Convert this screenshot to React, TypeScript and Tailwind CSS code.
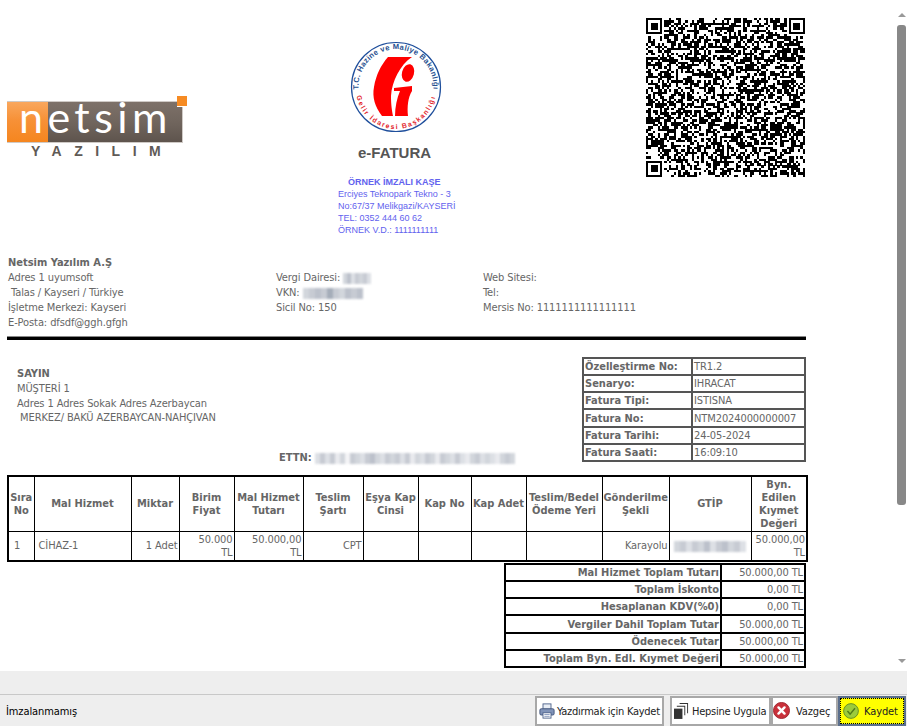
import React from "react";

const font = "font-['DejaVu_Sans_Condensed','DejaVu_Sans',sans-serif]";

// pseudo random modules for the qr drawing
const qrSize = 69;
const inFinder = (x: number, y: number) =>
  (x < 8 && y < 8) || (x >= qrSize - 8 && y < 8) || (x < 8 && y >= qrSize - 8);

const qrCells: { x: number; y: number }[] = [];
let seed = 1337;
for (let y = 0; y < qrSize; y++) {
  for (let x = 0; x < qrSize; x++) {
    seed = (seed * 1103515245 + 12345) & 0x7fffffff;
    if (!inFinder(x, y) && (seed >> 16) % 100 < 52) qrCells.push({ x, y });
  }
}

const QrCode = () => (
  <svg width="159" height="159" viewBox="0 0 69 69" shapeRendering="crispEdges">
    <rect width="69" height="69" fill="#fff" />
    {qrCells.map((c) => (
      <rect key={`${c.x}-${c.y}`} x={c.x} y={c.y} width="1.02" height="1.02" fill="#000" />
    ))}
    {[
      [0, 0],
      [62, 0],
      [0, 62],
    ].map(([x, y]) => (
      <g key={`${x}-${y}`}>
        <rect x={x} y={y} width="7" height="7" fill="#000" />
        <rect x={x + 1} y={y + 1} width="5" height="5" fill="#fff" />
        <rect x={x + 2} y={y + 2} width="3" height="3" fill="#000" />
      </g>
    ))}
  </svg>
);

const NetsimLogo = () => (
  <svg width="181" height="75" viewBox="0 -10 181 75">
    <defs>
      <linearGradient id="brown" x1="0" y1="0" x2="0" y2="1">
        <stop offset="0" stopColor="#7d7169" />
        <stop offset="0.55" stopColor="#6f645c" />
        <stop offset="1" stopColor="#5e544d" />
      </linearGradient>
      <linearGradient id="orange" x1="0" y1="0" x2="0" y2="1">
        <stop offset="0" stopColor="#f9a75d" />
        <stop offset="0.45" stopColor="#f79137" />
        <stop offset="1" stopColor="#f5861f" />
      </linearGradient>
    </defs>
    <rect x="0" y="5" width="176" height="42" fill="#cfcac6" />
    <rect x="0" y="6" width="41" height="40" fill="url(#orange)" />
    <rect x="41" y="6" width="134" height="40" fill="url(#brown)" />
    <rect x="170" y="0" width="11" height="11" fill="#fff" />
    <rect x="170" y="0" width="10" height="10" fill="#f68b23" />
    <text x="12" y="37" fill="#fff" fontFamily="Lato, sans-serif" fontSize="43" letterSpacing="4.4">
      netsim
    </text>
    <text x="24" y="60" fill="#5f5a56" fontFamily="'Liberation Sans', sans-serif" fontWeight="700" fontSize="14" letterSpacing="12.5">
      YAZILIM
    </text>
  </svg>
);

const GibSeal = () => (
  <svg width="92" height="92" viewBox="0 0 92 92">
    <defs>
      <path id="sealTop" d="M 16.5 69 A 37.5 37.5 0 1 1 75.5 69" />
      <path id="sealBottom" d="M 6 48 A 40 40 0 0 0 86 48" />
    </defs>
    <circle cx="46" cy="46" r="44.5" fill="#fff" stroke="#1f4f9c" strokeWidth="1.2" />
    <text fill="#27508f" fontFamily="'Liberation Sans', sans-serif" fontWeight="700" fontSize="7.6" letterSpacing="0.35">
      <textPath href="#sealTop" startOffset="50%" textAnchor="middle">
        T.C. Hazine ve Maliye Bakanlığı
      </textPath>
    </text>
    <text fill="#e2232b" fontFamily="'Liberation Sans', sans-serif" fontWeight="700" fontSize="6.8" letterSpacing="1.5">
      <textPath href="#sealBottom" startOffset="50%" textAnchor="middle">
        Gelir İdaresi Başkanlığı
      </textPath>
    </text>
    <path d="M38 16 L62 16 C50 24 42 40 41 55 C41 64 42 70 43 75 L32 75 C25 66 22 56 24 46 C26 34 31 24 38 16 Z" fill="#ff0000" />
    <ellipse cx="58" cy="32" rx="6" ry="9" transform="rotate(15 58 32)" fill="#ff0000" />
    <path d="M44 47 L62 45 L62 50 C58 56 57 66 58 75 L45 75 C45 66 47 57 50 50 L44 50 Z" fill="#ff0000" />
  </svg>
);

const PrinterIcon = () => (
  <svg width="16" height="16" viewBox="0 0 18 18">
    <rect x="4.5" y="1" width="9" height="6" fill="#e8edf5" stroke="#4a5f88" />
    <rect x="1" y="6.5" width="16" height="7" rx="1.5" fill="#8093b8" stroke="#3d5078" />
    <rect x="4.5" y="11" width="9" height="6" fill="#fff" stroke="#4a5f88" />
    <path d="M6 13h6M6 15h6" stroke="#8093b8" />
  </svg>
);

const StackIcon = () => (
  <svg width="15" height="17" viewBox="0 0 16 18">
    <path d="M6 1h9v11h-1V2H6z" fill="#333" />
    <path d="M3 4h9v10h-1V5H3z" fill="#333" />
    <rect x="0" y="7" width="9" height="11" fill="#333" />
  </svg>
);

const CancelIcon = () => (
  <svg width="17" height="17" viewBox="0 0 18 18">
    <circle cx="9" cy="9" r="8.5" fill="#c9303a" stroke="#9d2630" />
    <path d="M5.8 5.8l6.4 6.4M12.2 5.8l-6.4 6.4" stroke="#fff" strokeWidth="2.6" strokeLinecap="round" />
  </svg>
);

const OkIcon = () => (
  <svg width="16" height="16" viewBox="0 0 18 18">
    <circle cx="9" cy="9" r="8.3" fill="#9ccb3b" stroke="#5f8a1e" />
    <path d="M5 9l3 3.5 5.5-6.5" fill="none" stroke="#4f7a18" strokeWidth="1.6" />
  </svg>
);

// mosaic used where the values are blurred in the screenshot
const Smudge = ({ levels, cell = 6 }: { levels: number[]; cell?: number }) => (
  <span className="inline-flex h-[11px] align-middle blur-[1px]">
    {levels.map((level, i) => (
      <span key={i} className="h-full bg-[#8f98a8]" style={{ width: cell, opacity: level }} />
    ))}
  </span>
);

const infoRows = [
  ["Özelleştirme No:", "TR1.2"],
  ["Senaryo:", "IHRACAT"],
  ["Fatura Tipi:", "ISTISNA"],
  ["Fatura No:", "NTM2024000000007"],
  ["Fatura Tarihi:", "24-05-2024"],
  ["Fatura Saati:", "16:09:10"],
];

const totals = [
  ["Mal Hizmet Toplam Tutarı", "50.000,00 TL"],
  ["Toplam İskonto", "0,00 TL"],
  ["Hesaplanan KDV(%0)", "0,00 TL"],
  ["Vergiler Dahil Toplam Tutar", "50.000,00 TL"],
  ["Ödenecek Tutar", "50.000,00 TL"],
  ["Toplam Byn. Edl. Kıymet Değeri", "50.000,00 TL"],
];

const lineHeaders: { label: React.ReactNode; width: string }[] = [
  { label: <>Sıra<br />No</>, width: "w-[26px]" },
  { label: "Mal Hizmet", width: "w-[97px]" },
  { label: "Miktar", width: "w-[48px]" },
  { label: <>Birim<br />Fiyat</>, width: "w-[55px]" },
  { label: <>Mal Hizmet<br />Tutarı</>, width: "w-[69px]" },
  { label: <>Teslim<br />Şartı</>, width: "w-[60px]" },
  { label: <>Eşya Kap<br />Cinsi</>, width: "w-[55px]" },
  { label: "Kap No", width: "w-[53px]" },
  { label: "Kap Adet", width: "w-[55px]" },
  { label: <>Teslim/Bedel<br />Ödeme Yeri</>, width: "w-[76px]" },
  { label: <>Gönderilme<br />Şekli</>, width: "w-[67px]" },
  { label: "GTİP", width: "w-[82px]" },
  { label: <>Byn.<br />Edilen<br />Kıymet<br />Değeri</>, width: "w-[56px]" },
];

const cell = "border border-black px-[1px] text-[11px] leading-[13px] text-[#666]";

export default function App() {
  return (
    <div className={`flex h-[726px] w-[907px] flex-col overflow-hidden bg-[#eeeeee] text-[11px] tracking-[-0.1px] text-[#666] ${font}`}>
      <div className="flex h-[671px] bg-white">
        <div className="w-[897px] pl-[7px] pt-[18px]">
          <div className="w-[799px]">
            {/* header: logo, seal and qr */}
            <div className="flex h-[237px]">
              <div className="w-[323px] pt-[68px]">
                <NetsimLogo />
              </div>
              <div className="flex w-[316px] flex-col tracking-normal">
                <div className="pl-[20px] pt-[23px]">
                  <GibSeal />
                </div>
                <div className="pl-[28px] pt-[11px] font-['Liberation_Sans',sans-serif] text-[15px] font-bold leading-[18px] text-[#555]">
                  e-FATURA
                </div>
                <div className="pl-[8px] pt-[14px] font-['Liberation_Sans',sans-serif] text-[9px] leading-[12px] text-[#6262ee]">
                  <div className="pl-[10px] font-bold">ÖRNEK İMZALI KAŞE</div>
                  <div>Erciyes Teknopark Tekno - 3</div>
                  <div>No:67/37 Melikgazi/KAYSERİ</div>
                  <div>TEL: 0352 444 60 62</div>
                  <div>ÖRNEK V.D.: 1111111111</div>
                </div>
              </div>
              <QrCode />
            </div>

            {/* sender */}
            <div className="flex leading-[15px]">
              <div className="w-[268px] pl-[1px]">
                <div className="font-bold tracking-normal">Netsim Yazılım A.Ş</div>
                <div>Adres 1 uyumsoft</div>
                <div>&nbsp;Talas / Kayseri / Türkiye</div>
                <div>İşletme Merkezi: Kayseri</div>
                <div>E-Posta: dfsdf@ggh.gfgh</div>
              </div>
              <div className="w-[208px] pt-[15px] pl-[1px]">
                <div>Vergi Dairesi: <Smudge cell={4} levels={[0.4, 0.6, 0.3, 0.5, 0.4, 0.5, 0.3]} /></div>
                <div>VKN: <Smudge levels={[0.4, 0.5, 0.6, 0.5, 0.8, 0.5, 0.4, 0.6, 0.5, 0.6]} /></div>
                <div>Sicil No: 150</div>
              </div>
              <div className="pt-[15px]">
                <div>Web Sitesi:</div>
                <div>Tel:</div>
                <div>Mersis No: 1111111111111111</div>
              </div>
            </div>
            <div className="mt-[6px] h-[4px] border-t border-[#888] bg-black" />

            {/* customer and invoice info */}
            <div className="flex h-[135px] justify-between pt-[17px]">
              <div className="flex flex-col pl-[10px] pt-[9px] leading-[15px]">
                <div className="font-bold tracking-normal">SAYIN</div>
                <div>MÜŞTERİ 1</div>
                <div>Adres 1 Adres Sokak Adres Azerbaycan</div>
                <div className="leading-[13px]">&nbsp;MERKEZ/ BAKÜ AZERBAYCAN-NAHÇIVAN</div>
                <div className="pl-[262px] pt-[26px] font-bold tracking-normal">
                  ETTN: <span className="font-normal"><Smudge cell={5} levels={[0.3, 0.5, 0.3, 0.5, 0.2, 0.4, 0.1, 0.5, 0.4, 0.3, 0.5, 0.6, 0.4, 0.3, 0.5, 0.4, 0.5, 0.3, 0.5, 0.2, 0.4, 0.3, 0.5, 0.4, 0.2, 0.5, 0.4, 0.3, 0.5, 0.3, 0.2, 0.4, 0.5, 0.3, 0.4, 0.3, 0.2, 0.4, 0.5, 0.4]} /></span>
                </div>
              </div>
              <table className="h-[105px] w-[224px] table-fixed border-collapse border-2 border-[#444]">
                <tbody>
                  {infoRows.map(([label, value]) => (
                    <tr key={label}>
                      <td className="w-[109px] border-2 border-[#555] px-[1px] py-0 text-[11px] font-bold leading-[13px] tracking-normal">{label}</td>
                      <td className="border-2 border-[#555] px-[1px] py-0 text-[11px] leading-[13px]">{value}</td>
                    </tr>
                  ))}
                </tbody>
              </table>
            </div>

            {/* invoice lines */}
            <table className="w-[799px] table-fixed border-collapse border-2 border-black">
              <thead>
                <tr className="h-[55px]">
                  {lineHeaders.map((h, i) => (
                    <th key={i} className={`${cell} ${h.width} text-center font-bold tracking-normal`}>{h.label}</th>
                  ))}
                </tr>
              </thead>
              <tbody>
                <tr className="h-[30px]">
                  <td className={`${cell} pl-[5px]`}>1</td>
                  <td className={`${cell} pl-[4px]`}>CİHAZ-1</td>
                  <td className={`${cell} text-right`}>1 Adet</td>
                  <td className={`${cell} text-right`}>50.000<br />TL</td>
                  <td className={`${cell} text-right`}>50.000,00<br />TL</td>
                  <td className={`${cell} text-right`}>CPT</td>
                  <td className={cell} />
                  <td className={cell} />
                  <td className={cell} />
                  <td className={cell} />
                  <td className={`${cell} text-right`}>Karayolu</td>
                  <td className={`${cell} text-center`}>
                    <Smudge cell={6} levels={[0.4, 0.5, 0.3, 0.5, 0.4, 0.6, 0.3, 0.5, 0.6, 0.4, 0.5, 0.3]} />
                  </td>
                  <td className={`${cell} text-right`}>50.000,00<br />TL</td>
                </tr>
              </tbody>
            </table>

            {/* totals */}
            <div className="mt-[1px] flex justify-end">
              <table className="h-[105px] w-[302px] table-fixed border-collapse border-2 border-black">
                <tbody>
                  {totals.map(([label, value]) => (
                    <tr key={label}>
                      <td className="w-[216px] border-2 border-black px-[1px] py-0 text-right text-[11px] font-bold leading-[13px] tracking-normal">{label}</td>
                      <td className="border-2 border-black px-[1px] py-0 text-right text-[11px] leading-[13px]">{value}</td>
                    </tr>
                  ))}
                </tbody>
              </table>
            </div>
          </div>
        </div>

        {/* scrollbar */}
        <div className="flex w-[10px] flex-col items-center pt-[13px] pr-[1px]">
          <div className="h-0 w-0 border-x-[4px] border-b-[4px] border-x-transparent border-b-[#999]" />
          <div className="mt-[8px] h-[480px] w-[9px] rounded-[3px] bg-[#888]" />
          <div className="mt-[154px] h-0 w-0 border-x-[4px] border-t-[4px] border-x-transparent border-t-[#999]" />
        </div>
      </div>

      <div className="h-[23px]" />

      {/* footer */}
      <div className="flex h-[32px] items-center justify-between border-t border-[#c8c8c8] pl-[6px] pr-[1px]">
        <span className="pt-[3px] text-black">İmzalanmamış</span>
        <div className="flex h-[30px] whitespace-nowrap text-[#222]">
          <button className="mr-[6px] flex w-[129px] items-center gap-[2px] border-2 border-[#a8a8a8] bg-white pl-[2px] tracking-[-0.25px]">
            <PrinterIcon />
            <span className="pt-[3px]">Yazdırmak için Kaydet</span>
          </button>
          <button className="flex w-[101px] items-center gap-[3px] border-2 border-[#a8a8a8] bg-white pl-[2px] tracking-[-0.25px]">
            <StackIcon />
            <span className="pt-[3px]">Hepsine Uygula</span>
          </button>
          <button className="flex w-[67px] items-center gap-[6px] border-2 border-[#a8a8a8] bg-white">
            <CancelIcon />
            <span className="pt-[3px]">Vazgeç</span>
          </button>
          <div className="w-[68px] border-2 border-[#5b6f8c] bg-[#ffff00]">
            <button className="flex h-full w-full items-center gap-[5px] border border-dotted border-black pl-[2px]">
              <OkIcon />
              <span className="pt-[3px]">Kaydet</span>
            </button>
          </div>
        </div>
      </div>
    </div>
  );
}
